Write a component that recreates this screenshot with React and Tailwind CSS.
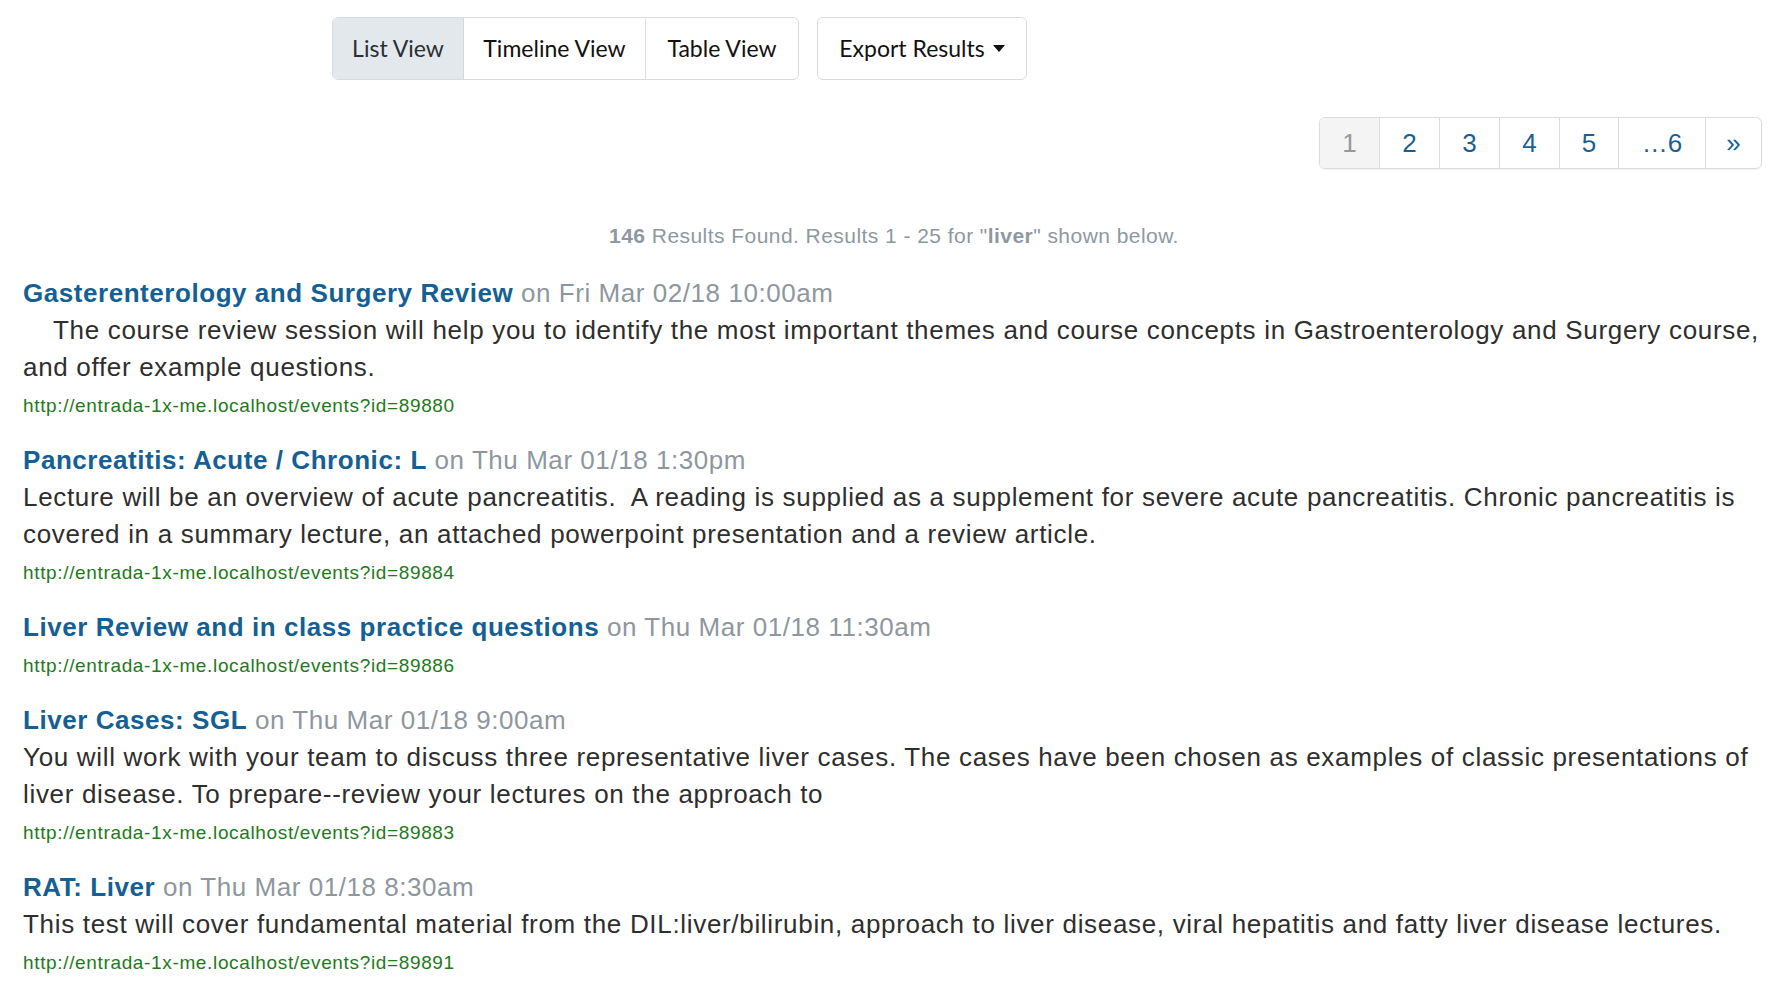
const results = [
  {
    title: 'Gasterenterology and Surgery Review',
    date: 'on Fri Mar 02/18 10:00am',
    body: 'The course review session will help you to identify the most important themes and course concepts in Gastroenterology and Surgery course, and offer example questions.',
    indent: true,
    url: 'http://entrada-1x-me.localhost/events?id=89880',
  },
  {
    title: 'Pancreatitis: Acute / Chronic: L',
    date: 'on Thu Mar 01/18 1:30pm',
    body: 'Lecture will be an overview of acute pancreatitis.\u00a0 A reading is supplied as a supplement for severe acute pancreatitis. Chronic pancreatitis is covered in a summary lecture, an attached powerpoint presentation and a review article.',
    url: 'http://entrada-1x-me.localhost/events?id=89884',
  },
  {
    title: 'Liver Review and in class practice questions',
    date: 'on Thu Mar 01/18 11:30am',
    body: null,
    url: 'http://entrada-1x-me.localhost/events?id=89886',
  },
  {
    title: 'Liver Cases: SGL',
    date: 'on Thu Mar 01/18 9:00am',
    body: 'You will work with your team to discuss three representative liver cases. The cases have been chosen as examples of classic presentations of liver disease. To prepare--review your lectures on the approach to',
    url: 'http://entrada-1x-me.localhost/events?id=89883',
  },
  {
    title: 'RAT: Liver',
    date: 'on Thu Mar 01/18 8:30am',
    body: 'This test will cover fundamental material from the DIL:liver/bilirubin, approach to liver disease, viral hepatitis and fatty liver disease lectures.',
    url: 'http://entrada-1x-me.localhost/events?id=89891',
  },
];

const pages = [
  { label: '1', active: true, w: 'w-[59px]' },
  { label: '2', w: 'w-[60px]' },
  { label: '3', w: 'w-[60px]' },
  { label: '4', w: 'w-[60px]' },
  { label: '5', w: 'w-[59px]' },
  { label: '…6', w: 'w-[87px]' },
  { label: '»', w: 'w-[56px]' },
];

export default function App() {
  return (
    <div className="min-h-screen bg-white font-['Liberation_Sans',Arial,sans-serif] text-[#333]">
      <div className="pl-[332px] pt-[17px] flex gap-[18px] font-['Lato',sans-serif] text-[23px] text-[#111]">
        <div className="flex h-[63px] rounded-[6px] border border-[#d9dcdf] overflow-hidden">
          <button className="w-[131px] bg-[#e3e8ed] border-r border-[#d3d8dd] text-[#2a2f33]">List View</button>
          <button className="w-[182px] border-r border-[#e0e0e0]">Timeline View</button>
          <button className="w-[152px]">Table View</button>
        </div>
        <button className="flex h-[63px] w-[210px] items-center justify-center gap-[8px] rounded-[6px] border border-[#d9dcdf]">
          Export Results
          <span className="inline-block h-0 w-0 border-x-[6px] border-t-[7px] border-x-transparent border-t-[#111]" />
        </button>
      </div>

      <div className="flex justify-end pr-[26px] mt-[37px]">
        <div className="flex h-[52px] rounded-[6px] border border-[#dcdcdc] shadow-[0_1px_2px_rgba(0,0,0,0.06)] overflow-hidden text-[26px]">
          {pages.map((p, i) => (
            <span
              key={p.label}
              className={`flex items-center justify-center ${p.w} ${i > 0 ? 'border-l border-[#dcdcdc]' : ''} ${
                p.active ? 'bg-[#f4f4f4] text-[#999]' : 'text-[#1a5f94]'
              }`}
            >
              {p.label}
            </span>
          ))}
        </div>
      </div>

      <p className="mt-[55px] text-center text-[21px] leading-[24px] tracking-[0.45px] text-[#8e98a1]">
        <b>146</b> Results Found. Results 1 - 25 for "<b>liver</b>" shown below.
      </p>

      <div className="mt-[27px] pl-[23px] pr-[22px]">
        {results.map((r) => (
          <div key={r.url} className="mb-[17px]">
            <div className="text-[26px] leading-[37px] tracking-[0.55px]">
              <span className="font-bold text-[#155f94]">{r.title}</span>{' '}
              <span className="text-[#8e979f]">{r.date}</span>
            </div>
            {r.body && (
              <p
                className={`text-[26px] leading-[37px] tracking-[0.68px] text-[#2e2e2e] ${r.indent ? 'indent-[30px]' : ''}`}
              >
                {r.body}
              </p>
            )}
            <div className="text-[19px] leading-[39px] tracking-[0.65px] text-[#1e7a1a]">{r.url}</div>
          </div>
        ))}
      </div>
    </div>
  );
}
